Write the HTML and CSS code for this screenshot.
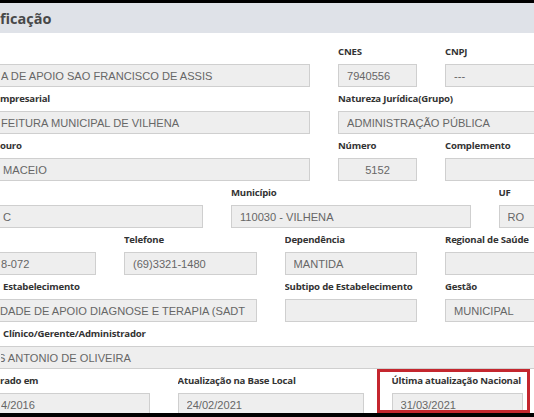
FILE: index.html
```html
<!DOCTYPE html>
<html lang="pt-BR">
<head>
<meta charset="utf-8">
<title>Identificação</title>
<link rel="stylesheet" href="styles.css">
</head>
<body>
<div class="frame">
  <div class="bar-top"></div>
  <div class="header"><h2 class="title">ficação</h2></div>
  <div class="form">
    <div class="row">
      <div class="fg edge s1-8"><label class="lbl">&nbsp;</label><input class="ctl" readonly value="A DE APOIO SAO FRANCISCO DE ASSIS"></div>
      <div class="fg s8-10"><label class="lbl">CNES</label><input class="ctl" readonly value="7940556"></div>
      <div class="fg s10-14"><label class="lbl">CNPJ</label><input class="ctl" readonly value="---"></div>
    </div>
    <div class="row">
      <div class="fg edge s1-8"><label class="lbl">mpresarial</label><input class="ctl" readonly value="FEITURA MUNICIPAL DE VILHENA"></div>
      <div class="fg s8-14"><label class="lbl">Natureza Jurídica(Grupo)</label><input class="ctl" readonly value="ADMINISTRAÇÃO PÚBLICA"></div>
    </div>
    <div class="row">
      <div class="fg edge s1-8"><label class="lbl">ouro</label><input class="ctl in-3" readonly value="MACEIO"></div>
      <div class="fg s8-10"><label class="lbl">Número</label><input class="ctl ctl-center" readonly value="5152"></div>
      <div class="fg s10-14"><label class="lbl">Complemento</label><input class="ctl" readonly value=""></div>
    </div>
    <div class="row">
      <div class="fg edge s1-6"><label class="lbl">&nbsp;</label><input class="ctl in-3" readonly value="C"></div>
      <div class="fg s6-11"><label class="lbl">Município</label><input class="ctl" readonly value="110030 - VILHENA"></div>
      <div class="fg s11-14"><label class="lbl">UF</label><input class="ctl" readonly value="RO"></div>
    </div>
    <div class="row">
      <div class="fg edge s1-4"><label class="lbl">&nbsp;</label><input class="ctl" readonly value="8-072"></div>
      <div class="fg s4-7"><label class="lbl">Telefone</label><input class="ctl" readonly value="(69)3321-1480"></div>
      <div class="fg s7-10"><label class="lbl">Dependência</label><input class="ctl" readonly value="MANTIDA"></div>
      <div class="fg s10-14"><label class="lbl">Regional de Saúde</label><input class="ctl" readonly value=""></div>
    </div>
    <div class="row">
      <div class="fg edge s1-7"><label class="lbl lbl-in">Estabelecimento</label><input class="ctl in-0" readonly value="DADE DE APOIO DIAGNOSE E TERAPIA (SADT"></div>
      <div class="fg s7-10"><label class="lbl">Subtipo de Estabelecimento</label><input class="ctl" readonly value=""></div>
      <div class="fg s10-14"><label class="lbl">Gestão</label><input class="ctl" readonly value="MUNICIPAL"></div>
    </div>
    <div class="row">
      <div class="fg edge s1-14"><label class="lbl lbl-in">Clínico/Gerente/Administrador</label><input class="ctl cut-s" readonly value="S ANTONIO DE OLIVEIRA"></div>
    </div>
    <div class="row">
      <div class="fg edge s1-5"><label class="lbl">rado em</label><input class="ctl" readonly value="4/2016"></div>
      <div class="fg s5-9"><label class="lbl">Atualização na Base Local</label><input class="ctl" readonly value="24/02/2021"></div>
      <div class="fg flag s9-12"><label class="lbl">Última atualização Nacional</label><input class="ctl" readonly value="31/03/2021"></div>
    </div>
  </div>
  <div class="bar-bottom"></div>
</div>
</body>
</html>
```
FILE: styles.css
```css
html, body {
  margin: 0;
  padding: 0;
  background: #000;
}

.frame {
  width: 534px;
  height: 417px;
  overflow: hidden;
  display: flex;
  flex-direction: column;
  background: #fff;
}

.bar-top {
  height: 3px;
  flex: none;
  background: #000;
}

.bar-bottom {
  height: 4px;
  flex: none;
  background: #000;
}

.header {
  height: 30px;
  flex: none;
  background: #dfe2e8;
  display: flex;
  align-items: center;
}

.title {
  margin: 0;
  padding-left: 0;
  font-family: "Open Sans", "Liberation Sans", sans-serif;
  font-weight: 700;
  font-size: 14.5px;
  color: #484848;
  white-space: nowrap;
}

.form {
  flex: 1;
  overflow: hidden;
  padding-top: 7px;
  background: #fff;
}

.row {
  display: grid;
  grid-template-columns: 2px repeat(12, 53.5px);
  width: 644px;
}

.fg {
  box-sizing: border-box;
  height: 47px;
  padding: 5px 13px 0 15px;
  min-width: 0;
}

.fg.edge {
  padding-left: 0;
}

.lbl {
  display: block;
  height: 14px;
  line-height: 14px;
  margin-bottom: 5px;
  font-family: "Open Sans", "Liberation Sans", sans-serif;
  font-weight: 700;
  font-size: 9.6px;
  letter-spacing: -0.2px;
  color: #333;
  white-space: nowrap;
  overflow: hidden;
}

.lbl-in {
  padding-left: 3px;
}

.ctl {
  display: block;
  box-sizing: border-box;
  width: 100%;
  height: 23px;
  margin: 0;
  border: 1px solid #cfcfcf;
  border-radius: 0;
  background: #eeeeee;
  padding: 0 8px;
  font-family: "Liberation Sans", Arial, sans-serif;
  font-size: 11.1px;
  color: #666;
  outline: none;
}

.ctl-center {
  text-align: center;
}

.edge .ctl {
  border-left: 0;
  padding-left: 1px;
}

.edge .ctl.in-0 {
  padding-left: 0;
  padding-right: 0;
}

.edge .ctl.in-3 {
  padding-left: 3px;
}

.edge .ctl.cut-s {
  text-indent: -3px;
}

.fg.flag {
  border: 3px solid #c4262e;
  height: 44px;
  margin-right: 7px;
  padding: 2px 4px 0 12px;
  overflow: hidden;
}

.flag .lbl {
  overflow: visible;
}

.s1-4 { grid-column: 1 / 4; }
.s1-5 { grid-column: 1 / 5; }
.s1-6 { grid-column: 1 / 6; }
.s1-7 { grid-column: 1 / 7; }
.s1-8 { grid-column: 1 / 8; }
.s1-14 { grid-column: 1 / 14; }
.s4-7 { grid-column: 4 / 7; }
.s5-9 { grid-column: 5 / 9; }
.s6-11 { grid-column: 6 / 11; }
.s7-10 { grid-column: 7 / 10; }
.s8-10 { grid-column: 8 / 10; }
.s8-14 { grid-column: 8 / 14; }
.s9-12 { grid-column: 9 / 12; }
.s10-14 { grid-column: 10 / 14; }
.s11-14 { grid-column: 11 / 14; }
```
